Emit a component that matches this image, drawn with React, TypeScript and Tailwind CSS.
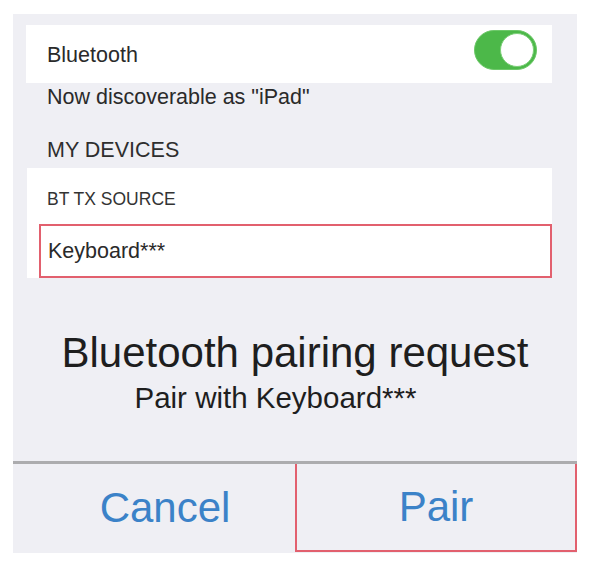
import React from "react";

const font = { fontFamily: '"Liberation Sans", Arial, Helvetica, sans-serif' };

function Toggle() {
  return (
    <div className="relative w-[63px] h-[40px] rounded-full bg-[#4cb849] border border-[#6cc868]">
      <div className="absolute right-[2px] top-[2px] w-[34px] h-[34px] rounded-full bg-white border border-[#7dcf79]" />
    </div>
  );
}

export default function App() {
  return (
    <div className="w-[596px] h-[564px] bg-white pt-[14px] pl-[13px]" style={font}>
      <div className="w-[564px] h-[539px] bg-[#efeff4] flex flex-col">
        {/* Bluetooth switch row */}
        <div className="ml-[13px] mt-[11px] w-[526px] h-[58px] bg-white flex items-start justify-between">
          <span className="ml-[21px] mt-[18px] text-[21.5px] leading-[24px] text-[#2a2a2a]">Bluetooth</span>
          <div className="mt-[5px] mr-[15px]">
            <Toggle />
          </div>
        </div>

        <div className="ml-[34px] mt-[2px] text-[21.5px] leading-[24px] text-[#2a2a2a]">
          Now discoverable as "iPad"
        </div>

        <div className="ml-[34px] mt-[29px] text-[21.5px] leading-[24px] text-[#2e2e2e]">MY DEVICES</div>

        {/* Device list */}
        <div className="ml-[14px] mt-[6px] w-[525px] h-[110px] bg-white flex flex-col">
          <div className="ml-[20px] mt-[21px] text-[17.5px] leading-[20px] text-[#333]">BT TX SOURCE</div>
          <div className="ml-[12px] mt-[15px] h-[54px] border-2 border-[#e2606e] pl-[7px] pt-[13px]">
            <span className="text-[21.5px] leading-[24px] text-[#2a2a2a]">Keyboard***</span>
          </div>
        </div>

        {/* Pairing alert */}
        <div className="mt-[51px] text-center text-[42px] leading-[48px] text-[#1e1e1e]">
          Bluetooth pairing request
        </div>
        <div className="mt-[4px] text-center text-[29.5px] leading-[33px] text-[#1e1e1e] pr-[39px]">
          Pair with Keyboard***
        </div>

        <div className="mt-[47px] h-[3px] bg-[#acacae]" />
        <div className="flex h-[88px]">
          <div className="w-1/2 flex items-center justify-center pl-[22px] text-[42px] leading-[48px] text-[#3b82c8]">
            Cancel
          </div>
          <div className="w-1/2 flex items-center justify-center border-l-2 border-r-2 border-b-2 border-[#e2606e] text-[42px] leading-[48px] text-[#3b82c8]">
            Pair
          </div>
        </div>
      </div>
    </div>
  );
}
